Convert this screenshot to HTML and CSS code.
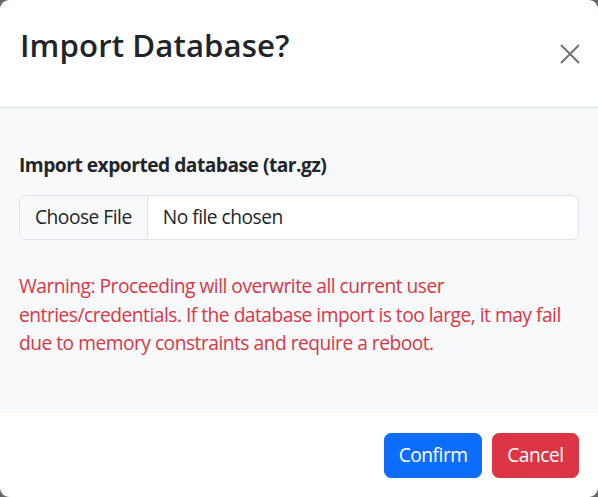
FILE: index.html
```html
<!DOCTYPE html>
<html lang="en">
<head>
<meta charset="utf-8">
<title>Import Database?</title>
<link rel="stylesheet" href="styles.css">
</head>
<body>
<div class="modal">
  <div class="modal-header">
    <h1 class="modal-title">Import Database?</h1>
    <button class="btn-close" aria-label="Close">
      <svg width="20" height="20" viewBox="0 0 20 20"><path d="M1 1 L19 19 M19 1 L1 19" stroke="#707070" stroke-width="2" fill="none"/></svg>
    </button>
  </div>
  <div class="modal-body">
    <label class="form-label">Import exported database (tar.gz)</label>
    <div class="file-input">
      <span class="file-btn">Choose File</span>
      <span class="file-name">No file chosen</span>
    </div>
    <p class="warning">Warning: Proceeding will overwrite all current user entries/credentials. If the database import is too large, it may fail due to memory constraints and require a reboot.</p>
  </div>
  <div class="modal-footer">
    <button class="btn btn-primary">Confirm</button>
    <button class="btn btn-danger">Cancel</button>
  </div>
</div>
</body>
</html>
```
FILE: styles.css
```css
html, body {
  margin: 0;
  padding: 0;
  height: 100%;
  background: #666666;
}
body {
  font-family: "Open Sans", "Noto Sans", sans-serif;
  color: #212529;
  font-size: 19.2px;
  line-height: 28.8px;
  letter-spacing: -0.5px;
}
.modal {
  width: 598px;
  height: 497px;
  background: #ffffff;
  border-radius: 9px;
  overflow: hidden;
  display: flex;
  flex-direction: column;
}
.modal-header {
  height: 108px;
  box-sizing: border-box;
  border-bottom: 1px solid #dee2e6;
  display: flex;
  justify-content: space-between;
  align-items: flex-start;
  padding: 0 18px 0 20px;
}
.modal-title {
  margin: 27px 0 0 0;
  font-size: 31.2px;
  line-height: 37px;
  font-weight: 600;
  letter-spacing: 0.1px;
}
.btn-close {
  margin-top: 44px;
  width: 20px;
  height: 20px;
  padding: 0;
  border: 0;
  background: transparent;
  display: flex;
}
.modal-body {
  background: #f8f9fa;
  height: 305px;
  box-sizing: border-box;
  padding: 43px 19px 0 19px;
}
.form-label {
  display: block;
  font-weight: 700;
  margin-bottom: 15px;
}
.file-input {
  display: flex;
  height: 45px;
  box-sizing: border-box;
  border: 1px solid #dee2e6;
  border-radius: 7px;
  background: #ffffff;
  overflow: hidden;
}
.file-btn {
  background: #f8f9fa;
  border-right: 1px solid #dee2e6;
  padding: 0 15px 0 15px;
  display: flex;
  align-items: center;
}
.file-name {
  padding: 0 15px;
  display: flex;
  align-items: center;
}
.warning {
  margin: 32px 0 0 0;
  color: #dc3545;
}
.modal-footer {
  flex: 1;
  display: flex;
  justify-content: flex-end;
  align-items: flex-start;
  gap: 10px;
  padding: 20px 19px 0 0;
}
.btn {
  font-family: inherit;
  font-size: 19.2px;
  line-height: 28.8px;
  letter-spacing: -0.5px;
  height: 45px;
  padding: 0 13.4px;
  border: 1px solid transparent;
  border-radius: 7px;
  color: #ffffff;
}
.btn-primary {
  background: #0d6efd;
  border-color: #0d6efd;
}
.btn-danger {
  background: #dc3545;
  border-color: #dc3545;
  padding: 0 14.4px;
}
```
